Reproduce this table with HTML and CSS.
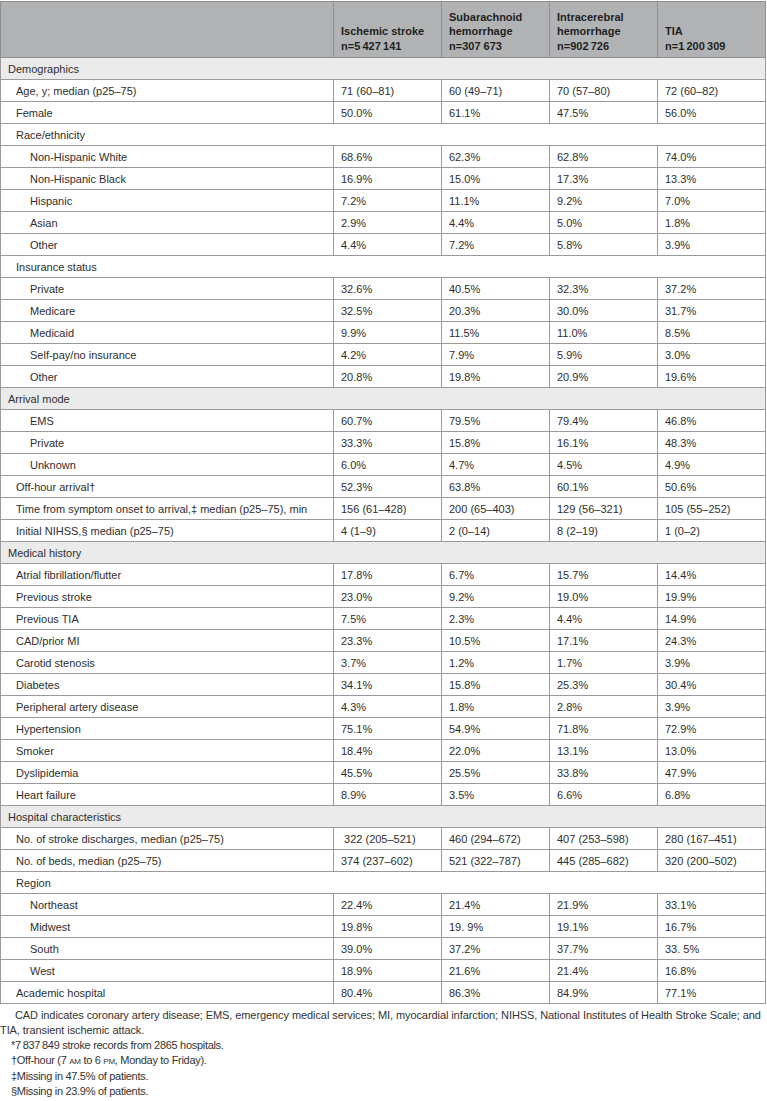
FILE: index.html
```html
<!DOCTYPE html>
<html>
<head>
<meta charset="utf-8">
<link rel="stylesheet" href="styles.css">
</head>
<body>
<table class="tbl">
<colgroup><col class="c0"><col class="cd"><col class="cd"><col class="cd"><col class="cd"></colgroup>
<thead>
<tr><th></th><th>Ischemic stroke<br>n=5&#8201;427&#8201;141</th><th>Subarachnoid<br>hemorrhage<br>n=307 673</th><th>Intracerebral<br>hemorrhage<br>n=902&#8201;726</th><th>TIA<br>n=1&#8201;200&#8201;309</th></tr>
</thead>
<tbody>
<tr class="sec"><td colspan="5">Demographics</td></tr>
<tr><td class="l1">Age, y; median (p25–75)</td><td>71 (60–81)</td><td>60 (49–71)</td><td>70 (57–80)</td><td>72 (60–82)</td></tr>
<tr><td class="l1">Female</td><td>50.0%</td><td>61.1%</td><td>47.5%</td><td>56.0%</td></tr>
<tr class="sub"><td colspan="5" class="l1">Race/ethnicity</td></tr>
<tr><td class="l2">Non-Hispanic White</td><td>68.6%</td><td>62.3%</td><td>62.8%</td><td>74.0%</td></tr>
<tr><td class="l2">Non-Hispanic Black</td><td>16.9%</td><td>15.0%</td><td>17.3%</td><td>13.3%</td></tr>
<tr><td class="l2">Hispanic</td><td>7.2%</td><td>11.1%</td><td>9.2%</td><td>7.0%</td></tr>
<tr><td class="l2">Asian</td><td>2.9%</td><td>4.4%</td><td>5.0%</td><td>1.8%</td></tr>
<tr><td class="l2">Other</td><td>4.4%</td><td>7.2%</td><td>5.8%</td><td>3.9%</td></tr>
<tr class="sub"><td colspan="5" class="l1">Insurance status</td></tr>
<tr><td class="l2">Private</td><td>32.6%</td><td>40.5%</td><td>32.3%</td><td>37.2%</td></tr>
<tr><td class="l2">Medicare</td><td>32.5%</td><td>20.3%</td><td>30.0%</td><td>31.7%</td></tr>
<tr><td class="l2">Medicaid</td><td>9.9%</td><td>11.5%</td><td>11.0%</td><td>8.5%</td></tr>
<tr><td class="l2">Self-pay/no insurance</td><td>4.2%</td><td>7.9%</td><td>5.9%</td><td>3.0%</td></tr>
<tr><td class="l2">Other</td><td>20.8%</td><td>19.8%</td><td>20.9%</td><td>19.6%</td></tr>
<tr class="sec"><td colspan="5">Arrival mode</td></tr>
<tr><td class="l2">EMS</td><td>60.7%</td><td>79.5%</td><td>79.4%</td><td>46.8%</td></tr>
<tr><td class="l2">Private</td><td>33.3%</td><td>15.8%</td><td>16.1%</td><td>48.3%</td></tr>
<tr><td class="l2">Unknown</td><td>6.0%</td><td>4.7%</td><td>4.5%</td><td>4.9%</td></tr>
<tr><td class="l1">Off-hour arrival†</td><td>52.3%</td><td>63.8%</td><td>60.1%</td><td>50.6%</td></tr>
<tr><td class="l1">Time from symptom onset to arrival,‡ median (p25–75), min</td><td>156 (61–428)</td><td>200 (65–403)</td><td>129 (56–321)</td><td>105 (55–252)</td></tr>
<tr><td class="l1">Initial NIHSS,§ median (p25–75)</td><td>4 (1–9)</td><td>2 (0–14)</td><td>8 (2–19)</td><td>1 (0–2)</td></tr>
<tr class="sec"><td colspan="5">Medical history</td></tr>
<tr><td class="l1">Atrial fibrillation/flutter</td><td>17.8%</td><td>6.7%</td><td>15.7%</td><td>14.4%</td></tr>
<tr><td class="l1">Previous stroke</td><td>23.0%</td><td>9.2%</td><td>19.0%</td><td>19.9%</td></tr>
<tr><td class="l1">Previous TIA</td><td>7.5%</td><td>2.3%</td><td>4.4%</td><td>14.9%</td></tr>
<tr><td class="l1">CAD/prior MI</td><td>23.3%</td><td>10.5%</td><td>17.1%</td><td>24.3%</td></tr>
<tr><td class="l1">Carotid stenosis</td><td>3.7%</td><td>1.2%</td><td>1.7%</td><td>3.9%</td></tr>
<tr><td class="l1">Diabetes</td><td>34.1%</td><td>15.8%</td><td>25.3%</td><td>30.4%</td></tr>
<tr><td class="l1">Peripheral artery disease</td><td>4.3%</td><td>1.8%</td><td>2.8%</td><td>3.9%</td></tr>
<tr><td class="l1">Hypertension</td><td>75.1%</td><td>54.9%</td><td>71.8%</td><td>72.9%</td></tr>
<tr><td class="l1">Smoker</td><td>18.4%</td><td>22.0%</td><td>13.1%</td><td>13.0%</td></tr>
<tr><td class="l1">Dyslipidemia</td><td>45.5%</td><td>25.5%</td><td>33.8%</td><td>47.9%</td></tr>
<tr><td class="l1">Heart failure</td><td>8.9%</td><td>3.5%</td><td>6.6%</td><td>6.8%</td></tr>
<tr class="sec"><td colspan="5">Hospital characteristics</td></tr>
<tr><td class="l1">No. of stroke discharges, median (p25–75)</td><td>&nbsp;322 (205–521)</td><td>460 (294–672)</td><td>407 (253–598)</td><td>280 (167–451)</td></tr>
<tr><td class="l1">No. of beds, median (p25–75)</td><td>374 (237–602)</td><td>521 (322–787)</td><td>445 (285–682)</td><td>320 (200–502)</td></tr>
<tr class="sub"><td colspan="5" class="l1">Region</td></tr>
<tr><td class="l2">Northeast</td><td>22.4%</td><td>21.4%</td><td>21.9%</td><td>33.1%</td></tr>
<tr><td class="l2">Midwest</td><td>19.8%</td><td>19. 9%</td><td>19.1%</td><td>16.7%</td></tr>
<tr><td class="l2">South</td><td>39.0%</td><td>37.2%</td><td>37.7%</td><td>33. 5%</td></tr>
<tr><td class="l2">West</td><td>18.9%</td><td>21.6%</td><td>21.4%</td><td>16.8%</td></tr>
<tr><td class="l1">Academic hospital</td><td>80.4%</td><td>86.3%</td><td>84.9%</td><td>77.1%</td></tr>
</tbody>
</table>
<div class="notes">
<p class="first">CAD indicates coronary artery disease; EMS, emergency medical services; MI, myocardial infarction; NIHSS, National Institutes of Health Stroke Scale; and TIA, transient ischemic attack.</p>
<p>*7&#8201;837&#8201;849 stroke records from 2865 hospitals.</p>
<p>†Off-hour (7 <span class="sc">am</span> to 6 <span class="sc">pm</span>, Monday to Friday).</p>
<p>‡Missing in 47.5% of patients.</p>
<p>§Missing in 23.9% of patients.</p>
</div>
</body>
</html>
```

FILE: styles.css
```css
html, body {
  margin: 0;
  padding: 0;
  background: #ffffff;
}
body {
  font-family: "Liberation Sans", Arial, sans-serif;
  color: #2e2e2e;
  width: 767px;
}
.tbl {
  border-collapse: collapse;
  width: 766px;
  table-layout: fixed;
  font-size: 11px;
  margin-top: 1px;
}
.c0 { width: 333px; }
.cd { width: 108px; }
.tbl th {
  background: #b1b2b4;
  border: 1px solid #8e8f91;
  text-align: left;
  vertical-align: bottom;
  font-weight: bold;
  color: #1f1f1f;
  line-height: 14.5px;
  height: 51px;
  padding: 0 7px 4px 7px;
}
.tbl td {
  border: 1px solid #9a9a9a;
  height: 21px;
  padding: 0 7px;
  line-height: 14px;
  vertical-align: middle;
  white-space: nowrap;
}
.tbl .sec td {
  background: #ebebeb;
}
.tbl td.l1 { padding-left: 15px; }
.tbl td.l2 { padding-left: 29px; }
.notes {
  font-size: 11px;
  letter-spacing: -0.08px;
  line-height: 15px;
  color: #333;
  margin-top: 4px;
}
.notes p {
  margin: 0;
  padding-left: 11px;
  letter-spacing: -0.3px;
}
.notes p.first {
  padding-left: 0;
  text-indent: 15px;
  letter-spacing: -0.08px;
}
.sc {
  font-size: 8px;
  text-transform: uppercase;
}
```
